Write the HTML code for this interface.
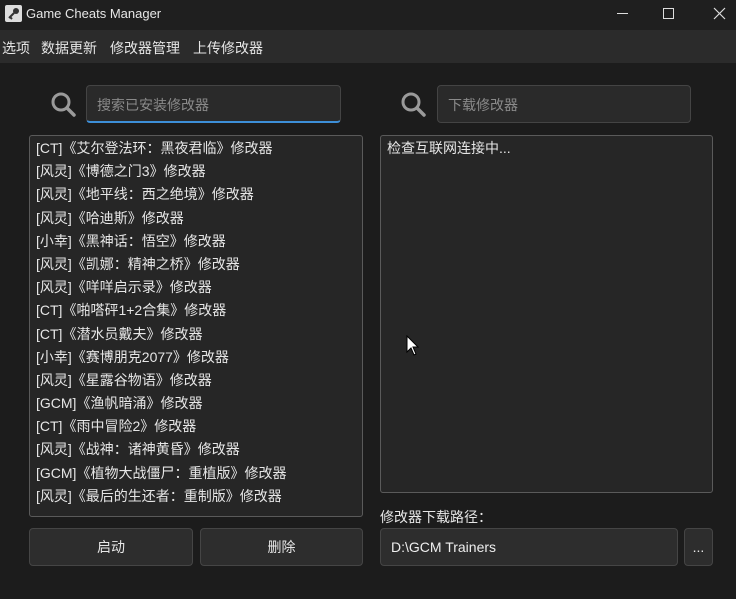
<!DOCTYPE html>
<html><head><meta charset="utf-8"><style>
*{margin:0;padding:0;box-sizing:border-box}
body{width:736px;height:599px;background:#1c1c1c;font-family:"Liberation Sans","Noto Sans CJK SC",sans-serif;color:#e6e6e6;position:relative;overflow:hidden;font-size:14px}
.abs{position:absolute}
.title{left:0;top:0;width:736px;height:30px;background:#1f1f1f}
.menu{left:0;top:30px;width:736px;height:33px;background:#2b2b2b;font-size:14px}
.menu span{position:absolute;top:8px}
.box{background:#262626;border:1px solid #5a5a5a;border-radius:3px}
.inp{background:#2a2a2a;border:1px solid #444;border-radius:4px;color:#8a8a8a;font-size:14px;padding:9px 0 0 10px}
.btn{background:#2d2d2d;border:1px solid #454545;border-radius:4px;text-align:center;font-size:14px}
.list div{height:23.2px;line-height:23px;padding-left:6px;white-space:nowrap}
</style></head><body>
<div class="abs title">
 <div class="abs" style="left:5px;top:5px;width:17px;height:17px;background:#ddd;border-radius:2px"></div>
 <svg class="abs" style="left:5px;top:5px" width="17" height="17"><circle cx="11" cy="6" r="3" fill="#333"/><path d="M9 8 L4 13 M5 12 L7 14" stroke="#333" stroke-width="2"/></svg>
 <div class="abs" style="left:26px;top:6px;font-size:13px">Game Cheats Manager</div>
 <div class="abs" style="left:617px;top:13px;width:11px;height:1px;background:#ddd"></div>
 <div class="abs" style="left:663px;top:8px;width:11px;height:11px;border:1px solid #ddd"></div>
 <svg class="abs" style="left:713px;top:7px" width="13" height="13"><path d="M1 1L12 12M12 1L1 12" stroke="#ddd" stroke-width="1.2"/></svg>
</div>
<div class="abs menu"><span style="left:2px">选项</span><span style="left:41px">数据更新</span><span style="left:110px">修改器管理</span><span style="left:193px">上传修改器</span></div>

<svg class="abs" style="left:50px;top:91px" width="26" height="26"><circle cx="11" cy="11" r="8" fill="none" stroke="#9a9a9a" stroke-width="3"/><path d="M17 17L24 24" stroke="#9a9a9a" stroke-width="3.5" stroke-linecap="round"/></svg>
<div class="abs inp" style="left:86px;top:85px;width:255px;height:38px;border-bottom:2px solid #3d8fd8">搜索已安装修改器</div>
<svg class="abs" style="left:400px;top:91px" width="26" height="26"><circle cx="11" cy="11" r="8" fill="none" stroke="#9a9a9a" stroke-width="3"/><path d="M17 17L24 24" stroke="#9a9a9a" stroke-width="3.5" stroke-linecap="round"/></svg>
<div class="abs inp" style="left:437px;top:85px;width:254px;height:38px">下载修改器</div>

<div class="abs box list" style="left:29px;top:135px;width:334px;height:382px;padding-top:1px">
<div>[CT]《艾尔登法环：黑夜君临》修改器</div>
<div>[风灵]《博德之门3》修改器</div>
<div>[风灵]《地平线：西之绝境》修改器</div>
<div>[风灵]《哈迪斯》修改器</div>
<div>[小幸]《黑神话：悟空》修改器</div>
<div>[风灵]《凯娜：精神之桥》修改器</div>
<div>[风灵]《咩咩启示录》修改器</div>
<div>[CT]《啪嗒砰1+2合集》修改器</div>
<div>[CT]《潜水员戴夫》修改器</div>
<div>[小幸]《赛博朋克2077》修改器</div>
<div>[风灵]《星露谷物语》修改器</div>
<div>[GCM]《渔帆暗涌》修改器</div>
<div>[CT]《雨中冒险2》修改器</div>
<div>[风灵]《战神：诸神黄昏》修改器</div>
<div>[GCM]《植物大战僵尸：重植版》修改器</div>
<div>[风灵]《最后的生还者：重制版》修改器</div>
</div>
<div class="abs box list" style="left:380px;top:135px;width:333px;height:358px;padding-top:1px"><div>检查互联网连接中...</div></div>

<div class="abs btn" style="left:29px;top:528px;width:164px;height:38px;line-height:37px">启动</div>
<div class="abs btn" style="left:200px;top:528px;width:163px;height:38px;line-height:37px">删除</div>
<div class="abs" style="left:380px;top:507px">修改器下载路径：</div>
<div class="abs btn" style="left:380px;top:528px;width:298px;height:38px;line-height:37px;text-align:left;padding-left:10px;color:#eee">D:\GCM Trainers</div>
<div class="abs btn" style="left:684px;top:528px;width:29px;height:38px;line-height:37px">...</div>

<svg class="abs" style="left:406px;top:335px" width="14" height="22"><path d="M1 1L1 17L5 13L8 20L10 19L7 12L12 12Z" fill="#fff" stroke="#000" stroke-width="1"/></svg>
</body></html>
